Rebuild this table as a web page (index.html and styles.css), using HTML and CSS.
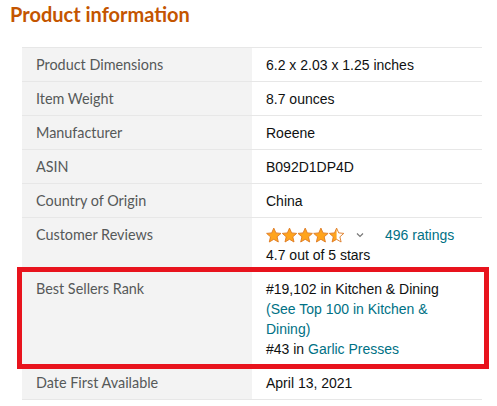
FILE: index.html
```html
<!DOCTYPE html>
<html>
<head>
<meta charset="utf-8">
<link rel="stylesheet" href="styles.css">
</head>
<body>
<div class="page">
  <h1 class="title">Product information</h1>
  <div class="table-wrap">
    <table class="info">
      <tr><th>Product Dimensions</th><td>6.2 x 2.03 x 1.25 inches</td></tr>
      <tr><th>Item Weight</th><td>8.7 ounces</td></tr>
      <tr><th>Manufacturer</th><td>Roeene</td></tr>
      <tr><th>ASIN</th><td>B092D1DP4D</td></tr>
      <tr><th>Country of Origin</th><td>China</td></tr>
      <tr><th>Customer Reviews</th><td>
        <div class="rating-line">
          <svg class="stars" width="80" height="16" viewBox="0 0 80 16">
            <defs>
              <path id="st" d="M7.8 0.6 L9.9 5.4 L15 5.9 L11.1 9.3 L12.3 14.5 L7.8 11.8 L3.3 14.5 L4.5 9.3 L0.6 5.9 L5.7 5.4 Z"/>
              <clipPath id="half"><rect x="0" y="0" width="7.8" height="16"/></clipPath>
            </defs>
            <use href="#st" x="0" y="0.5" fill="#FFA41C" stroke="#DE7921" stroke-width="0.9"/>
            <use href="#st" x="15.7" y="0.5" fill="#FFA41C" stroke="#DE7921" stroke-width="0.9"/>
            <use href="#st" x="31.4" y="0.5" fill="#FFA41C" stroke="#DE7921" stroke-width="0.9"/>
            <use href="#st" x="47.1" y="0.5" fill="#FFA41C" stroke="#DE7921" stroke-width="0.9"/>
            <g transform="translate(62.8 0.5)">
              <use href="#st" fill="#FFA41C" clip-path="url(#half)"/>
              <use href="#st" fill="none" stroke="#DE7921" stroke-width="0.9"/>
            </g>
          </svg>
          <svg class="chev" width="8" height="6" viewBox="0 0 8 6"><path d="M1 1.5 L4 4.5 L7 1.5" fill="none" stroke="#777" stroke-width="1.2"/></svg>
          <span class="link">496 ratings</span>
        </div>
        <div>4.7 out of 5 stars</div>
      </td></tr>
      <tr><th>Best Sellers Rank</th><td>
        <div>#19,102 in Kitchen &amp; Dining <span class="link">(See Top 100 in Kitchen &amp; Dining)</span></div>
        <div>#43 in <span class="link">Garlic Presses</span></div>
      </td></tr>
      <tr><th>Date First Available</th><td>April 13, 2021</td></tr>
    </table>
    <div class="highlight"></div>
  </div>
</div>
</body>
</html>
```

FILE: styles.css
```css
html, body {
  margin: 0;
  padding: 0;
  background: #fff;
}
.page {
  width: 497px;
  height: 406px;
  overflow: hidden;
}
.title {
  margin: 0;
  padding: 1px 0 0 10px;
  font-family: Lato, "Open Sans", sans-serif;
  font-weight: 700;
  font-size: 20px;
  line-height: 26px;
  color: #C45500;
}
.table-wrap {
  position: relative;
  margin: 20px 0 0 22px;
  width: 460px;
}
.info {
  border-collapse: collapse;
  width: 460px;
  table-layout: fixed;
}
.info tr {
  border-top: 1px solid #e7e7e7;
  border-bottom: 1px solid #e7e7e7;
}
.info th {
  width: 202px;
  background: #f3f3f3;
  text-align: left;
  vertical-align: top;
  font-family: Lato, "Open Sans", sans-serif;
  font-weight: 400;
  font-size: 14.4px;
  line-height: 20px;
  color: #565959;
  padding: 7px 14px 6px;
}
.info td {
  vertical-align: top;
  font-family: "Liberation Sans", Arial, sans-serif;
  font-size: 14px;
  line-height: 20px;
  color: #0F1111;
  padding: 7px 14px 6px;
}
.link {
  color: #007185;
}
.rating-line {
  display: flex;
  align-items: center;
  height: 20px;
}
.stars {
  display: block;
}
.chev {
  display: block;
  margin-left: 10px;
}
.rating-line .link {
  margin-left: 21px;
}
.highlight {
  position: absolute;
  left: -5px;
  top: 220px;
  width: 462px;
  height: 92px;
  border: 5px solid #E8131D;
  pointer-events: none;
}
```
